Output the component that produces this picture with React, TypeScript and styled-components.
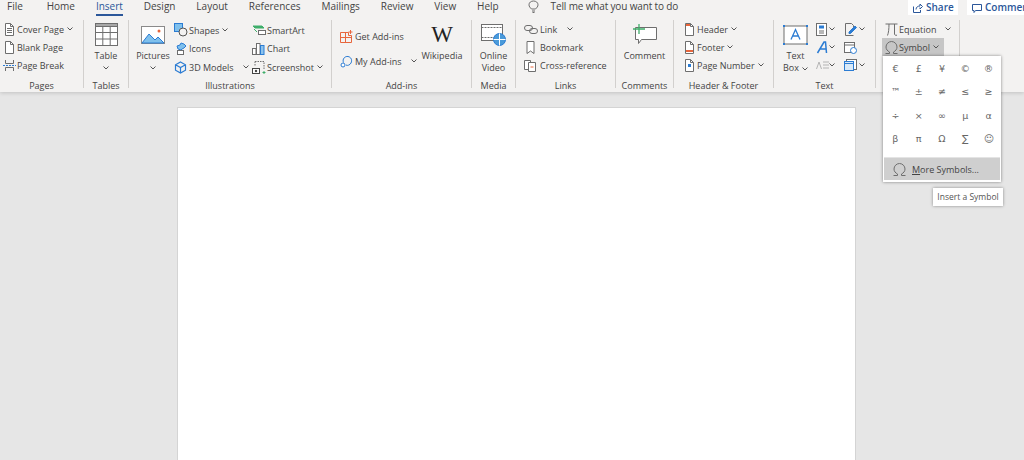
import React from "react";
import styled, { createGlobalStyle } from "styled-components";

const Global = createGlobalStyle`
  html, body { margin: 0; padding: 0; height: 100%; overflow: hidden; background: #e6e6e6; }
  body { font-family: "Open Sans", "Noto Sans", sans-serif; font-size: 9px; color: #444; }
  svg { flex: none; }
`;

const Window = styled.div`
  position: relative;
  width: 1024px;
  height: 460px;
  overflow: hidden;
`;

const Header = styled.div`
  background: #f3f2f1;
  box-shadow: 0 1px 4px rgba(0, 0, 0, 0.16);
`;

const TabRow = styled.div`
  display: flex;
  height: 18px;
  padding-left: 7px;
  gap: 20.9px;
  font-size: 10px;
  line-height: 13px;
  white-space: nowrap;
  overflow: hidden;
`;

const Tab = styled.div<{ $active?: boolean }>`
  height: 16px;
  color: ${(p) => (p.$active ? "#2b579a" : "#444")};
  border-bottom: ${(p) => (p.$active ? "2px solid #2b579a" : "2px solid transparent")};
  box-sizing: border-box;
  &:first-child {
    margin-right: 3px;
  }
`;

const TellMe = styled.div`
  display: flex;
  align-items: flex-start;
  gap: 12px;
  margin-left: 8px;
  letter-spacing: -0.15px;
`;

const Actions = styled.div`
  display: flex;
  flex: none;
  gap: 9px;
  margin-left: auto;
  font-size: 10px;
  font-weight: 600;
  color: #2b579a;
`;

const ActionButton = styled.div<{ $w: number }>`
  display: flex;
  align-items: center;
  gap: 3px;
  width: ${(p) => p.$w}px;
  height: 15px;
  padding-left: 5px;
  box-sizing: border-box;
  background: #fff;
`;

const Ribbon = styled.div`
  display: flex;
  height: 74px;
  padding-top: 2px;
  box-sizing: border-box;
`;

const Group = styled.div<{ $w: number }>`
  display: flex;
  flex-direction: column;
  width: ${(p) => p.$w}px;
  flex: none;
`;

const GroupBody = styled.div<{ $pl?: number }>`
  display: flex;
  height: 60px;
  padding-left: ${(p) => p.$pl ?? 0}px;
`;

const GroupLabel = styled.div`
  height: 12px;
  line-height: 12px;
  text-align: center;
  white-space: nowrap;
`;

const Separator = styled.div`
  flex: none;
  width: 1px;
  height: 68px;
  background: #d2d0ce;
`;

const Stack = styled.div<{ $w?: number; $top?: number; $gap?: number }>`
  display: flex;
  flex-direction: column;
  flex: none;
  width: ${(p) => (p.$w ? `${p.$w}px` : "auto")};
  padding-top: ${(p) => p.$top ?? 0}px;
  gap: ${(p) => p.$gap ?? 0}px;
`;

const Row = styled.div<{ $hot?: boolean; $pl?: number; $w?: number }>`
  display: flex;
  align-items: center;
  height: 18px;
  white-space: nowrap;
  padding-left: ${(p) => p.$pl ?? 0}px;
  box-sizing: border-box;
  width: ${(p) => (p.$w ? `${p.$w}px` : "auto")};
  background: ${(p) => (p.$hot ? "#c6c6c6" : "transparent")};
`;

const IconSlot = styled.span<{ $w?: number }>`
  display: flex;
  align-items: center;
  flex: none;
  width: ${(p) => p.$w ?? 15}px;
`;

const Caret = styled.svg.attrs({ viewBox: "0 0 6 4", width: 6, height: 4 })<{ $ml?: number }>`
  flex: none;
  margin-left: ${(p) => p.$ml ?? 3}px;
  fill: none;
  stroke: #555;
  stroke-width: 1;
`;

const Big = styled.div<{ $w?: number }>`
  display: flex;
  flex-direction: column;
  align-items: center;
  flex: none;
  width: ${(p) => (p.$w ? `${p.$w}px` : "100%")};
  line-height: 12px;
  white-space: nowrap;
  text-align: center;
`;

const BigIcon = styled.div`
  display: flex;
  align-items: center;
  justify-content: center;
  height: 29px;
  margin-bottom: 1px;
`;

const CaretLine = styled.div`
  display: flex;
  justify-content: center;
  padding-top: 4px;
`;

const DocArea = styled.div`
  padding: 15px 0 0 177px;
`;

const Page = styled.div`
  width: 677px;
  height: 400px;
  background: #fff;
  border: 1px solid #d4d4d4;
`;

const Wiki = styled.span`
  font-family: "Liberation Serif", serif;
  font-size: 23px;
  line-height: 24px;
  color: #222;
`;

const Menu = styled.div`
  position: absolute;
  left: 883px;
  top: 56px;
  width: 118px;
  height: 126px;
  box-sizing: border-box;
  padding-top: 1px;
  background: #fff;
  box-shadow: 0 0 3px rgba(0, 0, 0, 0.45);
`;

const SymbolGrid = styled.div`
  display: grid;
  grid-template-columns: repeat(5, 23.3px);
  grid-auto-rows: 23.3px;
  justify-content: center;
  height: 96px;
  color: #666;
  font-family: "DejaVu Sans", sans-serif;
  font-size: 9.5px;
`;

const SymbolCell = styled.div`
  display: flex;
  align-items: center;
  justify-content: center;
`;

const MoreRow = styled.div`
  display: flex;
  align-items: center;
  height: 22px;
  margin: 5px 1px 0;
  padding-left: 9px;
  gap: 6px;
  background: #cfcfcf;
  box-shadow: 0 -1px 0 #e4e4e4;
  u {
    text-underline-offset: 1px;
  }
`;

const Tooltip = styled.div`
  position: absolute;
  left: 933px;
  top: 188px;
  width: 70px;
  height: 18px;
  line-height: 18px;
  font-size: 8.5px;
  text-align: center;
  background: #fff;
  color: #555;
  box-shadow: 0 0 3px rgba(0, 0, 0, 0.4);
  white-space: nowrap;
`;

const BLUE = "#2b7cd3";
const ORANGE = "#e8663c";
const GREY = "#6e6e6e";

const Svg = ({ w = 13, h = 13, children }: { w?: number; h?: number; children: React.ReactNode }) => (
  <svg width={w} height={h} viewBox={`0 0 ${w} ${h}`} fill="none" stroke={GREY} strokeWidth="1">
    {children}
  </svg>
);

const Sheet = ({ band, tag }: { band?: string; tag?: string }) => (
  <Svg>
    <path d="M2.500.5h5l3 3v9h-8z" fill="#fff" />
    <path d="M7.500.5v3h3" />
    {band && <rect x="3" y={tag === "top" ? 1 : 9} width={tag === "top" ? 4 : 7} height="2" fill={band} stroke="none" />}
    {tag === "num" && <rect x="5" y="5" width="3" height="3" fill={BLUE} stroke="none" />}
  </Svg>
);

const chevron = <path d="M.5.5 3 3 5.500.5" />;

const OmegaIcon = () => (
  <Svg>
    <path d="M.5 12.500h4V11C2.500 10 1 8.300 1 6c0-3 2.500-5.500 5.500-5.500S12 3 12 6c0 2.300-1.500 4-3.500 5v1.500h4" />
  </Svg>
);

const Icons = {
  cover: <Svg><path d="M2.500.5h5l3 3v9h-8z" fill="#fff" /><path d="M7.500.5v3h3M4 5.500h5M4 7.500h5M4 9.500h5" /></Svg>,
  pageBreak: (
    <Svg>
      <path d="M2.500 1v3.500h8V1M2.500 12V8.500h8V12" />
      <path d="M0 6.500h13" stroke={BLUE} strokeDasharray="2 1" />
    </Svg>
  ),
  table: (
    <Svg w={23} h={23}>
      <rect x=".5" y=".5" width="22" height="22" fill="#fff" />
      <rect x=".5" y=".5" width="22" height="3" fill="#a8a8a8" />
      <path d="M7.800 3.500v19M15.200 3.500v19M.5 9.500h22M.5 16h22" />
    </Svg>
  ),
  pictures: (
    <Svg w={24} h={18}>
      <rect x=".5" y=".5" width="23" height="17" fill="#fff" stroke="#8a8a8a" />
      <path d="M1 17l7-9 6 6 3-3 6 6z" fill="#7fc0ec" stroke={BLUE} />
      <circle cx="18" cy="5" r="1.500" fill={ORANGE} stroke="none" />
    </Svg>
  ),
  shapes: (
    <Svg w={14} h={14}>
      <rect x=".5" y=".5" width="8" height="8" fill="#7fc0ec" stroke={BLUE} />
      <circle cx="9" cy="9" r="4" fill="#f3f2f1" stroke="#555" />
    </Svg>
  ),
  icons: (
    <Svg w={14} h={14}>
      <path d="M3 4l3-1 1-2 3 1 2 2-2 2-2 1-1 1-3-1z" fill="#7fc0ec" stroke={BLUE} />
      <rect x="3.500" y="8.500" width="6" height="4" fill="#fff" />
    </Svg>
  ),
  models: (
    <Svg w={13} h={13}>
      <path d="M6.500 1l5 2.800v5.400l-5 2.800-5-2.800V3.800zM1.500 3.800l5 2.800 5-2.800M6.500 6.600V12" stroke={BLUE} strokeWidth="1.200" />
    </Svg>
  ),
  smartArt: (
    <Svg w={14} h={12}>
      <path d="M1 2h9l2 2H3z" fill="#3fae6a" stroke="#3fae6a" />
      <path d="M2 5l3 3" stroke="#3fae6a" />
      <rect x="6.500" y="6.500" width="7" height="4" fill="#fff" />
    </Svg>
  ),
  chart: (
    <Svg w={13} h={13}>
      <rect x=".5" y="6.500" width="3.500" height="6" fill="#fff" />
      <rect x="4.500" y="1.500" width="3.500" height="11" fill="#fff" />
      <rect x="8.500" y="3.500" width="3.500" height="9" fill="#8cc3ed" stroke={BLUE} />
    </Svg>
  ),
  screenshot: (
    <Svg w={14} h={14}>
      <path d="M3 1.500h9v8M3 1.500v5" strokeDasharray="1.500 1" />
      <rect x=".5" y="8.500" width="7" height="5" fill="#fff" stroke="#444" />
      <circle cx="4" cy="11" r="1.200" fill="#444" stroke="none" />
      <path d="M12 11v3M10.500 12.500h3" stroke="#3fae6a" />
    </Svg>
  ),
  getAddins: (
    <svg width="13" height="13" viewBox="0 0 13 13" fill="none" stroke={ORANGE} strokeWidth="1">
      <path d="M.5 2.500h8v3h3v7h-11zM.5 7.500h11M5.500 2.500v10" />
      <path d="M10.500 0v4M8.500 2h4" />
    </svg>
  ),
  myAddins: (
    <svg width="13" height="13" viewBox="0 0 13 13" fill="none" stroke={BLUE} strokeWidth="1">
      <path d="M3.500 7.500C2 4 5 1 8 1.500c3 .5 4.500 3.500 3 6.500-1 2-3.500 3-5 2" />
      <circle cx="3" cy="10" r="2" fill="#fff" />
    </svg>
  ),
  video: (
    <Svg w={25} h={22}>
      <rect x=".5" y=".5" width="21" height="16" fill="#fff" />
      <path d="M.5 3.500h21M.5 13.500h21" strokeDasharray="2 1" />
      <circle cx="18.500" cy="15.500" r="6" fill="#4a9ad9" stroke={BLUE} />
      <path d="M12.500 15.500h12M18.500 9.500v12" stroke="#fff" />
    </Svg>
  ),
  link: (
    <Svg w={14} h={11}>
      <rect x=".5" y="1.500" width="8" height="5" rx="2.500" />
      <rect x="5.500" y="4.500" width="8" height="5" rx="2.500" />
    </Svg>
  ),
  bookmark: <Svg><path d="M3 .5h7v12L6.500 10 3 12.500z" fill="#fff" /></Svg>,
  crossRef: (
    <Svg>
      <path d="M.5 1.500h6v9h-6z" fill="#fff" />
      <path d="M4.500 3.500h7v9h-7z" fill="#fff" />
      <path d="M6.500 8h3" stroke={ORANGE} />
    </Svg>
  ),
  comment: (
    <Svg w={25} h={22}>
      <path d="M3.500 3.500h21v12h-15l-3 4v-4h-3z" fill="#fff" />
      <path d="M7 0v10M1 5h12" stroke="#3fae6a" strokeWidth="1.300" />
    </Svg>
  ),
  textBox: (
    <Svg w={25} h={20}>
      <rect x="1" y="1" width="23" height="18" fill="#fff" stroke={GREY} />
      <rect x="0" y="0" width="2" height="2" fill={BLUE} stroke="none" />
      <rect x="23" y="0" width="2" height="2" fill={BLUE} stroke="none" />
      <rect x="0" y="18" width="2" height="2" fill={BLUE} stroke="none" />
      <rect x="23" y="18" width="2" height="2" fill={BLUE} stroke="none" />
      <path d="M8 14.500l4.500-10 4.500 10M9.500 11h6" stroke={BLUE} strokeWidth="1.300" />
    </Svg>
  ),
  quickParts: (
    <Svg w={11} h={13}>
      <rect x=".5" y=".5" width="10" height="12" fill="#fff" />
      <rect x="3" y="2.500" width="5" height="3" fill={BLUE} stroke="none" />
      <path d="M3 8h5M3 10h5" />
    </Svg>
  ),
  wordArt: (
    <Svg w={13} h={13}>
      <path d="M1.500 12 8 1h1.500l1 11M4 8h6" stroke={BLUE} strokeWidth="1.500" />
    </Svg>
  ),
  dropCap: (
    <Svg w={13} h={11}>
      <path d="M.5 9 3 2l2.500 7M7 2h6M7 5h6M7 8h6" stroke="#b4b4b4" />
    </Svg>
  ),
  signature: (
    <Svg w={13} h={13}>
      <path d="M1.500 12.500V.5h6l2 2v2M1.500 12.500h8" />
      <path d="M5 9l6-6 1.500 1.500-6 6H5z" fill={BLUE} stroke={BLUE} />
    </Svg>
  ),
  date: (
    <Svg w={13} h={13}>
      <rect x=".5" y="1.500" width="10" height="10" fill="#fff" />
      <path d="M.5 4h10" />
      <circle cx="9.500" cy="9.500" r="3" fill="#fff" stroke={BLUE} />
    </Svg>
  ),
  object: (
    <Svg w={13} h={13}>
      <rect x="2.500" y=".5" width="10" height="10" fill="#fff" />
      <rect x=".5" y="2.500" width="9" height="9" fill="#d8e9f8" stroke={BLUE} />
      <path d="M.5 4.500h9" stroke={BLUE} />
    </Svg>
  ),
  equation: (
    <Svg>
      <path d="M.5 1h12M4 1c0 5-.5 9-1.500 11.500M9.500 1v10c0 1 .8 1.500 2.500 1.200" />
    </Svg>
  ),
  bulb: (
    <Svg w={11} h={13}>
      <path d="M3.500 9C2 7.500 1 6.500 1 4.800 1 2.500 3 1 5.500 1S10 2.500 10 4.800c0 1.700-1 2.700-2.500 4.200zM4 11h3M4.500 12.500h2" />
    </Svg>
  ),
  share: (
    <svg width="10" height="10" viewBox="0 0 10 10" fill="none" stroke="#2b579a">
      <path d="M.5 3.500v6h7V7M3 6.500C3 4 5 3 7 3V1l2.500 2.500L7 6V4.500" />
    </svg>
  ),
  bubble: (
    <svg width="10" height="10" viewBox="0 0 10 10" fill="none" stroke="#2b579a">
      <path d="M.5 1.500h9v6h-6L2 9.500v-2H.5z" />
    </svg>
  ),
};

const Chevron = ({ ml }: { ml?: number }) => <Caret $ml={ml}>{chevron}</Caret>;

const symbols = ["€", "£", "¥", "©", "®", "™", "±", "≠", "≤", "≥", "÷", "×", "∞", "µ", "α", "β", "π", "Ω", "∑", "☺"];
const tabs = ["File", "Home", "Insert", "Design", "Layout", "References", "Mailings", "Review", "View", "Help"];

const App = () => {
  return (
    <Window>
      <Global />
      <Header>
        <TabRow>
          {tabs.map((t) => (
            <Tab key={t} $active={t === "Insert"}>{t}</Tab>
          ))}
          <TellMe>
            {Icons.bulb}
            <span>Tell me what you want to do</span>
          </TellMe>
          <Actions>
            <ActionButton $w={50}>{Icons.share}Share</ActionButton>
            <ActionButton $w={57}>{Icons.bubble}Comments</ActionButton>
          </Actions>
        </TabRow>
        <Ribbon>
          <Group $w={83}>
            <GroupBody $pl={3}>
              <Stack>
                <Row><IconSlot $w={14}>{Icons.cover}</IconSlot>Cover Page<Chevron /></Row>
                <Row><IconSlot $w={14}><Sheet /></IconSlot>Blank Page</Row>
                <Row><IconSlot $w={14}>{Icons.pageBreak}</IconSlot>Page Break</Row>
              </Stack>
            </GroupBody>
            <GroupLabel>Pages</GroupLabel>
          </Group>
          <Separator />
          <Group $w={44}>
            <GroupBody>
              <Big><BigIcon>{Icons.table}</BigIcon>Table<CaretLine><Chevron ml={0} /></CaretLine></Big>
            </GroupBody>
            <GroupLabel>Tables</GroupLabel>
          </Group>
          <Separator />
          <Group $w={202}>
            <GroupBody $pl={3}>
              <Big $w={42}><BigIcon>{Icons.pictures}</BigIcon>Pictures<CaretLine><Chevron ml={0} /></CaretLine></Big>
              <Stack $w={78} $top={1} $gap={0.5}>
                <Row><IconSlot>{Icons.shapes}</IconSlot>Shapes<Chevron /></Row>
                <Row><IconSlot>{Icons.icons}</IconSlot>Icons</Row>
                <Row><IconSlot>{Icons.models}</IconSlot>3D Models<Chevron ml={9} /></Row>
              </Stack>
              <Stack $top={1} $gap={0.5}>
                <Row><IconSlot>{Icons.smartArt}</IconSlot>SmartArt</Row>
                <Row><IconSlot>{Icons.chart}</IconSlot>Chart</Row>
                <Row><IconSlot>{Icons.screenshot}</IconSlot>Screenshot<Chevron /></Row>
              </Stack>
            </GroupBody>
            <GroupLabel>Illustrations</GroupLabel>
          </Group>
          <Separator />
          <Group $w={139}>
            <GroupBody $pl={8}>
              <Stack $w={79} $top={7} $gap={7}>
                <Row><IconSlot>{Icons.getAddins}</IconSlot>Get Add-ins</Row>
                <Row><IconSlot>{Icons.myAddins}</IconSlot>My Add-ins<Chevron ml={9} /></Row>
              </Stack>
              <Big $w={46}><BigIcon><Wiki>W</Wiki></BigIcon>Wikipedia</Big>
            </GroupBody>
            <GroupLabel>Add-ins</GroupLabel>
          </Group>
          <Separator />
          <Group $w={43}>
            <GroupBody>
              <Big><BigIcon>{Icons.video}</BigIcon>Online<br />Video</Big>
            </GroupBody>
            <GroupLabel>Media</GroupLabel>
          </Group>
          <Separator />
          <Group $w={99}>
            <GroupBody $pl={8}>
              <Stack>
                <Row><IconSlot $w={16}>{Icons.link}</IconSlot>Link<Chevron ml={10} /></Row>
                <Row><IconSlot $w={16}>{Icons.bookmark}</IconSlot>Bookmark</Row>
                <Row><IconSlot $w={16}>{Icons.crossRef}</IconSlot>Cross-reference</Row>
              </Stack>
            </GroupBody>
            <GroupLabel>Links</GroupLabel>
          </Group>
          <Separator />
          <Group $w={57}>
            <GroupBody>
              <Big><BigIcon>{Icons.comment}</BigIcon>Comment</Big>
            </GroupBody>
            <GroupLabel>Comments</GroupLabel>
          </Group>
          <Separator />
          <Group $w={99}>
            <GroupBody $pl={9}>
              <Stack>
                <Row><IconSlot $w={14}><Sheet band={ORANGE} tag="top" /></IconSlot>Header<Chevron /></Row>
                <Row><IconSlot $w={14}><Sheet band={ORANGE} /></IconSlot>Footer<Chevron /></Row>
                <Row><IconSlot $w={14}><Sheet tag="num" /></IconSlot>Page Number<Chevron /></Row>
              </Stack>
            </GroupBody>
            <GroupLabel>Header &amp; Footer</GroupLabel>
          </Group>
          <Separator />
          <Group $w={101}>
            <GroupBody $pl={1}>
              <Big $w={41}><BigIcon>{Icons.textBox}</BigIcon>Text<span>Box<Chevron /></span></Big>
              <Stack $w={28}>
                <Row>{Icons.quickParts}<Chevron ml={2} /></Row>
                <Row>{Icons.wordArt}<Chevron ml={0} /></Row>
                <Row>{Icons.dropCap}<Chevron ml={0} /></Row>
              </Stack>
              <Stack>
                <Row>{Icons.signature}<Chevron ml={2} /></Row>
                <Row>{Icons.date}</Row>
                <Row>{Icons.object}<Chevron ml={2} /></Row>
              </Stack>
            </GroupBody>
            <GroupLabel>Text</GroupLabel>
          </Group>
          <Separator />
          <Group $w={83}>
            <GroupBody $pl={6}>
              <Stack>
                <Row $pl={3}><IconSlot $w={14}>{Icons.equation}</IconSlot>Equation<Chevron ml={9} /></Row>
                <Row $hot $w={62} $pl={3}><IconSlot $w={14}><OmegaIcon /></IconSlot>Symbol<Chevron /></Row>
              </Stack>
            </GroupBody>
          </Group>
          <Separator />
        </Ribbon>
      </Header>
      <DocArea>
        <Page />
      </DocArea>
      <Menu>
        <SymbolGrid>
          {symbols.map((s) => (
            <SymbolCell key={s}>{s}</SymbolCell>
          ))}
        </SymbolGrid>
        <MoreRow>
          <OmegaIcon />
          <span><u>M</u>ore Symbols...</span>
        </MoreRow>
      </Menu>
      <Tooltip>Insert a Symbol</Tooltip>
    </Window>
  );
};

export default App;
